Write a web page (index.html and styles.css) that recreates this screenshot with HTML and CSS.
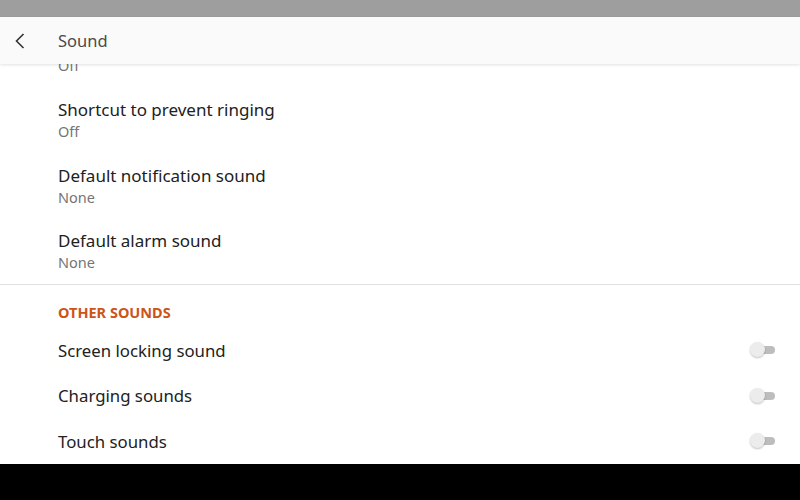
FILE: index.html
```html
<!DOCTYPE html>
<html>
<head>
    <title>Sound</title>
    <link rel="stylesheet" href="styles.css">
</head>
<body>
    <div class="screen">
        <div class="status-bar"></div>
        <div class="toolbar">
            <svg class="back" width="12" height="18" viewBox="0 0 12 18">
                <path d="M9.5 2 L2.5 9 L9.5 16" fill="none" stroke="#333" stroke-width="1.6"/>
            </svg>
            <span class="toolbar-title">Sound</span>
        </div>
        <div class="content">
            <div class="list">
                <div class="item item-partial">
                    <div class="item-sub">Off</div>
                </div>
                <div class="item">
                    <div class="item-title">Shortcut to prevent ringing</div>
                    <div class="item-sub">Off</div>
                </div>
                <div class="item">
                    <div class="item-title">Default notification sound</div>
                    <div class="item-sub">None</div>
                </div>
                <div class="item">
                    <div class="item-title">Default alarm sound</div>
                    <div class="item-sub">None</div>
                </div>
                <div class="divider"></div>
                <div class="section-header">OTHER SOUNDS</div>
                <div class="switch-row">
                    <span class="item-title">Screen locking sound</span>
                    <span class="switch"><span class="thumb"></span></span>
                </div>
                <div class="switch-row">
                    <span class="item-title">Charging sounds</span>
                    <span class="switch"><span class="thumb"></span></span>
                </div>
                <div class="switch-row">
                    <span class="item-title">Touch sounds</span>
                    <span class="switch"><span class="thumb"></span></span>
                </div>
            </div>
        </div>
        <div class="nav-bar"></div>
    </div>
</body>
</html>
```

FILE: styles.css
```css
body {
    margin: 0;
    font-family: "Noto Sans", "Open Sans", sans-serif;
    background: #000;
}
.screen {
    width: 800px;
    height: 500px;
    display: flex;
    flex-direction: column;
    overflow: hidden;
    background: #fff;
}
.status-bar {
    height: 17px;
    background: #9e9e9e;
    flex-shrink: 0;
}
.toolbar {
    height: 47px;
    background: #fafafa;
    display: flex;
    align-items: center;
    box-shadow: 0 1px 3px rgba(0, 0, 0, 0.12);
    position: relative;
    z-index: 1;
    flex-shrink: 0;
}
.back {
    margin-left: 14px;
    margin-right: 32px;
}
.toolbar-title {
    font-size: 16.5px;
    color: #4a4a4a;
    margin-top: -1px;
}
.content {
    flex: 1;
    overflow: hidden;
}
.list {
    margin-top: -10px;
}
.item {
    padding: 12px 58px 10px;
    height: 43.5px;
}
.item.item-partial {
    padding: 0 58px 10px;
    height: 23px;
}
.item-title {
    font-size: 17px;
    line-height: 21px;
    color: #212121;
}
.item-sub {
    font-size: 14.5px;
    line-height: 22px;
    color: #757575;
}
.divider {
    height: 1px;
    background: #e0e0e0;
}
.section-header {
    padding: 18px 58px 7px;
    font-size: 14.5px;
    line-height: 18px;
    font-weight: 700;
    color: #cc5418;
}
.switch-row {
    height: 45.5px;
    padding: 0 25px 0 58px;
    display: flex;
    align-items: center;
    justify-content: space-between;
}
.switch-row .item-title {
    font-size: 16.8px;
}
.switch {
    width: 24px;
    height: 8px;
    border-radius: 4px;
    background: #bdbdbd;
    position: relative;
}
.thumb {
    position: absolute;
    left: -1px;
    top: -4px;
    width: 15px;
    height: 15px;
    border-radius: 50%;
    background: #ececec;
    box-shadow: 0 1px 2px rgba(0, 0, 0, 0.25);
}
.nav-bar {
    height: 36px;
    background: #000;
    flex-shrink: 0;
}
```
